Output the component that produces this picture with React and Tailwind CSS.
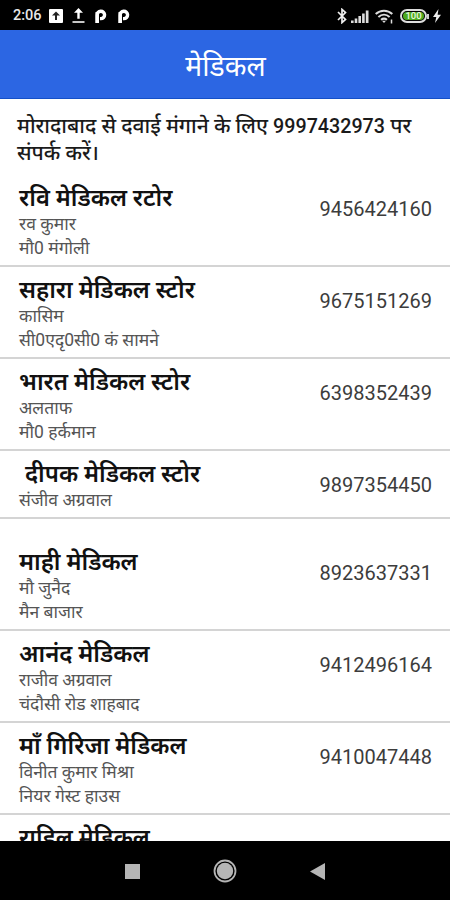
import React from 'react';

const stores = [
    { name: 'रवि मेडिकल रटोर', lines: ['रव कुमार', 'मौ0 मंगोली'], phone: '9456424160' },
    { name: 'सहारा मेडिकल स्टोर', lines: ['कासिम', 'सी0एदृ0सी0 कं सामने'], phone: '9675151269' },
    { name: 'भारत मेडिकल स्टोर', lines: ['अलताफ', 'मौ0 हर्कमान'], phone: '6398352439' },
    { name: '\u00a0दीपक मेडिकल स्टोर', lines: ['संजीव अग्रवाल'], phone: '9897354450' },
    { name: 'माही मेडिकल', lines: ['मौ जुनैद', 'मैन बाजार'], phone: '8923637331', spaced: true },
    { name: 'आनंद मेडिकल', lines: ['राजीव अग्रवाल', 'चंदौसी रोड शाहबाद'], phone: '9412496164' },
    { name: 'माँ गिरिजा मेडिकल', lines: ['विनीत कुमार मिश्रा', 'नियर गेस्ट हाउस'], phone: '9410047448' },
    { name: 'राहिल मेडिकल', lines: [], phone: '9760959494' },
];

const ParkingP = () => (
    <svg width="12" height="15" viewBox="0 0 12 15" fill="none" stroke="#fff" strokeWidth="3.4">
        <path d="M2.200 14V6.200a3.700 3.700 0 1 1 3.700 3.400H5" />
        <path d="M2.200 14V3" />
    </svg>
);

const StatusBar = () => (
    <div className="h-[30px] shrink-0 bg-black text-white flex items-center justify-between pl-[13px] pr-[9px] pt-[2px]">
        <div className="flex items-center">
            <span className="text-[14.5px] font-medium w-[36px] text-[#e8e8e8]">2:06</span>
            <svg width="14" height="14" viewBox="0 0 14 14">
                <rect width="14" height="14" rx="1" fill="#fff" />
                <path d="M7 2.500L3 6.500h3V11h2V6.500h3z" fill="#222" />
            </svg>
            <svg className="ml-[9px]" width="13" height="16" viewBox="0 0 13 16">
                <path d="M6.500 0L2 4.800h3.300v6h2.400v-6H11z" fill="#fff" />
                <path d="M.5 14h12" stroke="#ddd" strokeWidth="1.800" />
            </svg>
            <span className="ml-[10px]"><ParkingP /></span>
            <span className="ml-[11px]"><ParkingP /></span>
        </div>
        <div className="flex items-center">
            {/* Bluetooth */}
            <svg width="10" height="16" viewBox="0 0 10 16" fill="none" stroke="#eee" strokeWidth="1.700">
                <path d="M1 4l7.500 7.500L5 14.600V1.400l3.500 3.100L1 12" />
            </svg>
            {/* Signal bars */}
            <svg className="ml-[4px]" width="18" height="13" viewBox="0 0 18 13" fill="#ddd">
                <path d="M0 10.500h2.600V13H0zM3.700 8.500h2.600V13H3.700zM7.400 6h2.600v7H7.400zM11.100 3.400h2.600V13h-2.600zM14.800 .5h2.700V13h-2.700z" />
            </svg>
            {/* Wifi */}
            <svg className="ml-[6px]" width="19" height="15" viewBox="0 0 19 15" fill="none" stroke="#ddd" strokeWidth="2">
                <path d="M.7 5C5.500 .6 12.500 .6 17.300 5M3.400 8C6.800 5 11.200 5 14.600 8M6 10.800C8 9.200 10 9.200 12 10.800" />
                <path d="M7 11.700h4L9 14z" fill="#ddd" stroke="none" />
                <path d="M16.500 10.500v4" strokeWidth="1.500" />
            </svg>
            {/* Battery */}
            <div className="ml-[6px] w-[27px] h-[14px] rounded-full border-2 border-[#ddd] p-px">
                <div className="h-full rounded-full bg-[#4da91f] text-[9.5px] leading-[8px] font-medium text-center text-[#e9f7df]">100</div>
            </div>
            <div className="w-[2px] h-[5px] bg-[#ccc]" />
            <svg className="ml-[4px]" width="8" height="14" viewBox="0 0 8 14" fill="#eee">
                <path d="M5.500 0L0 8h3.300L2 14l6-8.300H4.600z" />
            </svg>
        </div>
    </div>
);

const StoreRow = ({ store }) => (
    <div className={`flex justify-between border-b-2 border-[#d4d4d4] pl-[19px] pr-[18px] pb-[5px] ${store.spaced ? 'pt-[29px]' : 'pt-[9px]'}`}>
        <div>
            <h2 className="text-[23.8px] leading-[28px] font-semibold text-[#111] whitespace-nowrap">{store.name}</h2>
            {store.lines.map((line) => (
                <p key={line} className="text-[17.5px] leading-[24px] h-[24px] text-[#555] whitespace-nowrap">{line}</p>
            ))}
        </div>
        <div className="pt-[11px] text-[20px] leading-[28px] text-[#3c3c3c]">{store.phone}</div>
    </div>
);

export default function App() {
    return (
        <div className="w-[450px] h-[900px] flex flex-col overflow-hidden bg-white font-[Roboto,'Noto_Sans','Noto_Sans_Devanagari',sans-serif]">
            <StatusBar />
            <header className="h-[69px] shrink-0 bg-[#2c66e3] border-b border-[#1450c8] flex items-center justify-center">
                <h1 className="text-[28.3px] leading-[36px] pt-[5px] pl-px text-white">मेडिकल</h1>
            </header>
            <main className="flex-1 min-h-0 overflow-hidden">
                <p className="pl-[17px] pt-[14px] h-[76px] text-[21px] leading-[27px] font-medium text-[#1a1a1a] whitespace-nowrap">
                    मोरादाबाद से दवाई मंगाने के लिए <span className="text-[19.7px]">9997432973</span> पर<br />संपर्क करें।
                </p>
                {stores.map((store) => (
                    <StoreRow key={store.name} store={store} />
                ))}
            </main>
            {/* Android navigation keys */}
            <nav className="h-[59px] shrink-0 bg-black flex items-center justify-center gap-[73px] pt-px">
                <svg width="15" height="15" viewBox="0 0 15 15"><rect width="15" height="15" fill="#b5b5b5" /></svg>
                <svg width="24" height="24" viewBox="0 0 24 24">
                    <circle cx="12" cy="12" r="10.500" fill="none" stroke="#b5b5b5" strokeWidth="1.800" />
                    <circle cx="12" cy="12" r="8.200" fill="#b5b5b5" />
                </svg>
                <svg width="15" height="17" viewBox="0 0 15 17"><path d="M15 0v17L0 8.500z" fill="#b5b5b5" /></svg>
            </nav>
        </div>
    );
}
